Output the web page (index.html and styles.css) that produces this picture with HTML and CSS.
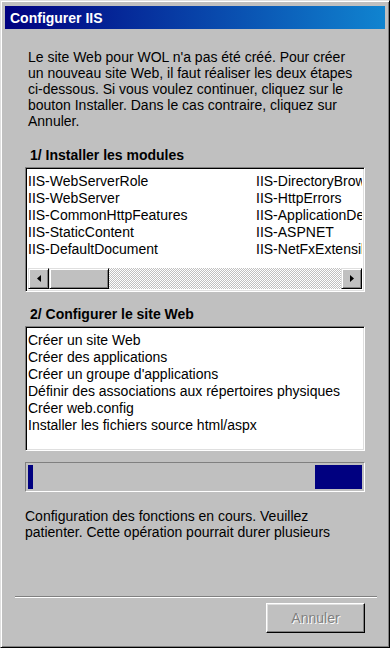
FILE: index.html
```html
<!DOCTYPE html>
<html>
<head>
    <link rel="stylesheet" href="styles.css">
    <title>Configurer IIS</title>
</head>
<body>
    <div class="window">
        <div class="titlebar">Configurer IIS</div>

        <div class="content">
            <p class="intro">Le site Web pour WOL n'a pas été créé. Pour créer un nouveau site Web, il faut réaliser les deux étapes ci-dessous. Si vous voulez continuer, cliquez sur le bouton Installer. Dans le cas contraire, cliquez sur Annuler.</p>

            <h2 class="step first-step">1/ Installer les modules</h2>
            <div class="listbox modules">
                <div class="columns">
                    <ul class="col first">
                        <li>IIS-WebServerRole</li>
                        <li>IIS-WebServer</li>
                        <li>IIS-CommonHttpFeatures</li>
                        <li>IIS-StaticContent</li>
                        <li>IIS-DefaultDocument</li>
                    </ul>
                    <ul class="col second">
                        <li>IIS-DirectoryBrowsing</li>
                        <li>IIS-HttpErrors</li>
                        <li>IIS-ApplicationDevelopment</li>
                        <li>IIS-ASPNET</li>
                        <li>IIS-NetFxExtensibility</li>
                    </ul>
                </div>
                <div class="hscroll">
                    <div class="sbtn">
                        <svg width="4" height="7" viewBox="0 0 4 7"><path d="M4 0 L0 3.5 L4 7 Z" fill="#000"/></svg>
                    </div>
                    <div class="thumb"></div>
                    <div class="track"></div>
                    <div class="sbtn">
                        <svg width="4" height="7" viewBox="0 0 4 7"><path d="M0 0 L4 3.5 L0 7 Z" fill="#000"/></svg>
                    </div>
                </div>
            </div>

            <h2 class="step second-step">2/ Configurer le site Web</h2>
            <div class="listbox tasks">
                <ul class="col">
                    <li>Créer un site Web</li>
                    <li>Créer des applications</li>
                    <li>Créer un groupe d'applications</li>
                    <li>Définir des associations aux répertoires physiques</li>
                    <li>Créer web.config</li>
                    <li>Installer les fichiers source html/aspx</li>
                </ul>
            </div>

            <div class="progress">
                <div class="block small"></div>
                <div class="block big"></div>
            </div>

            <p class="status">Configuration des fonctions en cours. Veuillez patienter. Cette opération pourrait durer plusieurs</p>
        </div>

        <div class="separator"></div>
        <div class="buttons">
            <button class="btn" disabled>Annuler</button>
        </div>
    </div>
</body>
</html>
```

FILE: styles.css
```css
* {
    box-sizing: border-box;
}

body {
    margin: 0;
    background-color: #ffffff;
    font-family: "Liberation Sans", Arial, sans-serif;
    font-size: 14px;
    color: #000;
}

.window {
    width: 390px;
    height: 648px;
    background-color: #c0c0c0;
    border-top: 1px solid #dfdfdf;
    border-left: 1px solid #dfdfdf;
    border-right: 1px solid #000;
    border-bottom: 1px solid #000;
    box-shadow: inset 1px 1px 0 #fff, inset -1px -1px 0 #808080;
    padding: 5px 4px 0 4px;
    display: flex;
    flex-direction: column;
}

.titlebar {
    height: 23px;
    background: linear-gradient(to right, #000080, #1084d0);
    color: #fff;
    font-weight: bold;
    font-size: 14px;
    padding: 4px 0 0 5px;
}

.content {
    padding: 0 20px 0 20px;
}

.intro {
    margin: 20px 0 0 3px;
    line-height: 16px;
    width: 335px;
}

.step {
    font-size: 14px;
    font-weight: bold;
    margin: 11px 0 4px 5px;
}

.step.first-step {
    margin-top: 18px;
}

.step.second-step {
    margin-top: 14px;
}

.listbox {
    background-color: #fff;
    border: 1px solid;
    border-color: #808080 #fff #fff #808080;
    box-shadow: inset 1px 1px 0 #000, inset -1px -1px 0 #dfdfdf;
    padding: 2px;
    overflow: hidden;
}

.listbox.modules {
    height: 125px;
    display: flex;
    flex-direction: column;
}

.listbox.tasks {
    height: 125px;
}

.columns {
    display: flex;
    flex: 1;
    overflow: hidden;
}

.col {
    list-style: none;
    margin: 0;
    padding: 3px 0 0 0;
    line-height: 17px;
    white-space: nowrap;
}

.col.first {
    width: 228px;
    flex: none;
}

.col.second {
    overflow: hidden;
    flex: 1;
}

.hscroll {
    height: 21px;
    display: flex;
}

.sbtn {
    width: 21px;
    height: 21px;
    background-color: #c0c0c0;
    border: 1px solid;
    border-color: #dfdfdf #000 #000 #dfdfdf;
    box-shadow: inset 1px 1px 0 #fff, inset -1px -1px 0 #808080;
    display: flex;
    align-items: center;
    justify-content: center;
}

.thumb {
    width: 60px;
    height: 21px;
    background-color: #c0c0c0;
    border: 1px solid;
    border-color: #dfdfdf #000 #000 #dfdfdf;
    box-shadow: inset 1px 1px 0 #fff, inset -1px -1px 0 #808080;
}

.track {
    flex: 1;
    background-color: #c0c0c0;
    background-image: repeating-conic-gradient(#fff 0 25%, #c0c0c0 0 50%);
    background-size: 2px 2px;
}

.progress {
    margin-top: 11px;
    height: 30px;
    border: 1px solid;
    border-color: #808080 #fff #fff #808080;
    padding: 2px;
    display: flex;
    justify-content: space-between;
}

.block {
    background-color: #000080;
    height: 100%;
}

.block.small {
    width: 5px;
}

.block.big {
    width: 47px;
}

.status {
    margin: 16px 0 0 0;
    line-height: 16px;
    width: 320px;
}

.separator {
    margin: auto 8px 0 10px;
    height: 2px;
    border-top: 1px solid #808080;
    border-bottom: 1px solid #fff;
}

.buttons {
    display: flex;
    justify-content: flex-end;
    padding: 5px 20px 14px 0;
}

.btn {
    width: 99px;
    height: 30px;
    background-color: #c0c0c0;
    border: 1px solid;
    border-color: #fff #000 #000 #fff;
    box-shadow: inset -1px -1px 0 #808080, inset 1px 1px 0 #dfdfdf;
    font-family: "Liberation Sans", Arial, sans-serif;
    font-size: 14px;
    color: #808080;
    text-shadow: 1px 1px 0 #fff;
    padding: 0;
}
```
